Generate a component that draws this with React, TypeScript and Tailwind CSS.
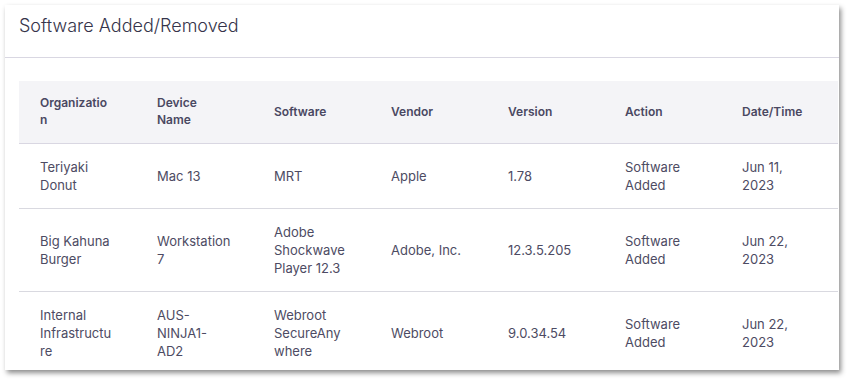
import React from "react";

interface Row {
  org: string;
  device: string;
  software: string;
  vendor: string;
  version: string;
  action: string;
  date: string;
}

const columns = ["Organization", "Device Name", "Software", "Vendor", "Version", "Action", "Date/Time"];

const rows: Row[] = [
  { org: "Teriyaki Donut", device: "Mac 13", software: "MRT", vendor: "Apple", version: "1.78", action: "Software Added", date: "Jun 11, 2023" },
  { org: "Big Kahuna Burger", device: "Workstation 7", software: "Adobe Shockwave Player 12.3", vendor: "Adobe, Inc.", version: "12.3.5.205", action: "Software Added", date: "Jun 22, 2023" },
  { org: "Internal Infrastructure", device: "AUS-NINJA1-AD2", software: "Webroot SecureAnywhere", vendor: "Webroot", version: "9.0.34.54", action: "Software Added", date: "Jun 22, 2023" },
];

export default function App() {
  return (
    <div className="w-[848px] h-[379px] bg-white pt-[5px] pl-[5px]" style={{ fontFamily: "Inter, 'Noto Sans', sans-serif" }}>
      <div className="w-[834px] h-[365px] bg-white overflow-hidden shadow-[2px_3px_5px_rgba(0,0,0,0.45)]">
        <div className="h-[53px] px-[14px] pt-[9px] border-b border-[#d9d7e2]">
          <h2 className="text-[18px] leading-[24px] font-light text-[#35344a]">Software Added/Removed</h2>
        </div>
        <div className="pl-[14px] pt-[23px]">
          <table className="table-fixed border-collapse w-[819px]">
            <colgroup>
              {columns.map((c) => (
                <col key={c} className="w-[117px]" />
              ))}
            </colgroup>
            <thead>
              <tr className="bg-[#f4f4f7] border-b border-[#d9d7e2]">
                {columns.map((c) => (
                  <th
                    key={c}
                    className="text-left align-middle pl-[21px] pr-[22px] pt-[13px] pb-[15px] text-[12px] leading-[17px] font-semibold text-[#4a4862] break-words"
                  >
                    {c}
                  </th>
                ))}
              </tr>
            </thead>
            <tbody>
              {rows.map((r) => (
                <tr key={r.org} className="border-b border-[#d9d9e0]">
                  {[r.org, r.device, r.software, r.vendor, r.version, r.action, r.date].map((v, i) => (
                    <td
                      key={i}
                      className="align-middle pl-[21px] pr-[22px] py-[14px] text-[13px] leading-[18px] text-[#4d4b63] break-words"
                    >
                      {v}
                    </td>
                  ))}
                </tr>
              ))}
            </tbody>
          </table>
        </div>
      </div>
    </div>
  );
}
